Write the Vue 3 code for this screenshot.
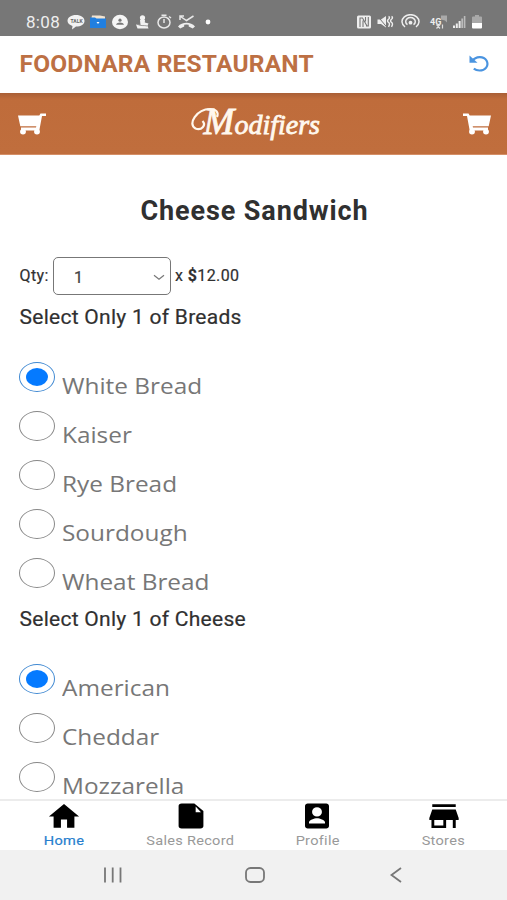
<script setup>
import { ref } from 'vue'

const qty = ref(1)
const groups = ref([
  { name: 'Breads', picked: 'White Bread', options: ['White Bread', 'Kaiser', 'Rye Bread', 'Sourdough', 'Wheat Bread'] },
  { name: 'Cheese', picked: 'American', options: ['American', 'Cheddar', 'Mozzarella'] },
])
const tabs = [
  { label: 'Home', icon: 'M9.700 21.300v-6.500h4.600v6.500h5.500V12.400h3.500L12 2.300.7 12.400h3.500v8.900z' },
  { label: 'Sales Record', icon: 'M5 2C3.500 2 2.700 3 2.700 4v16c0 1 .8 2 2.300 2h14c1.500 0 2.300-1 2.300-2V8l-6.800-6zm10.500 2.300L19.500 9h-4z' },
  { label: 'Profile', icon: 'M5 2c-1 0-2 1-2 2v16c0 1 1 2 2 2h14c1 0 2-1 2-2V4c0-1-1-2-2-2zm7 3a3.500 3.500 0 1 1 0 7.400A3.500 3.500 0 0 1 12 5zm6 13H6v-1c0-2 4-3.300 6-3.300s6 1.300 6 3.300z' },
  { label: 'Stores', icon: 'M3.200 2.500h17.600v2.200H3.200zM20.800 6.700H3.200L1 13.500v1.700h1.600v6.300h11v-6.300h5v6.300h2.200v-6.300H23v-1.700zM11.500 19.500H4.700v-4.300h6.800z' },
]
const active = ref('Home')
</script>

<template>
  <div class="phone">
    <div class="status">
      <span class="clock">8:08</span>
      <svg class="status-left" width="148" height="16" viewBox="0 0 148 16">
        <path d="M9 1c5 0 8.500 2.500 8.500 6S14 12.500 9 12.500L5 15.500l.5-3.500C2.500 11 .5 9.300.5 7 .5 3.500 4 1 9 1z" fill="#f2f2f2" />
        <text x="3.500" y="8.800" class="tiny">TALK</text>
        <path d="M25 1.500h8l5 1v4H24z" fill="#f3e4d1" />
        <path d="M23 3.500h5l1.500 1H39v9.500H23z" fill="#217fe0" />
        <path d="M29.500 8h3L31 10z" fill="#fff" />
        <ellipse cx="53" cy="8" rx="8" ry="7.200" fill="#f5f5f5" />
        <circle cx="53" cy="6.200" r="1.600" fill="#777" />
        <path d="M49 10.700c1-2.800 7-2.800 8 0z" fill="#777" />
        <g fill="#f2f2f2">
          <circle cx="75.500" cy="3.800" r="2.600" />
          <path d="M73 6h5l-.2 2.500 3.700 1-1 2 1 3H70.500l-1.500-4 4.500.500z" />
        </g>
        <path d="M70 10c3 2.500 7 1 10.500 2" stroke="#888" stroke-width=".8" fill="none" />
        <g fill="none" stroke="#e8e8e8" stroke-width="1.500">
          <ellipse cx="97" cy="8.500" rx="6" ry="5.500" />
          <path d="M94.500 1.200h5M97 5v4M102 2.500l2 1.500" />
          <path d="M113.500 2.500l6 4 7-4.500M113 6v-4h4" />
        </g>
        <path d="M111 12.500c4-5 13-5 17 0l-2.300 2-4-2v-1.700q-2.300-.7-4.500 0v1.700l-4 2z" fill="#eee" />
        <circle cx="141" cy="8" r="2.400" fill="#fff" />
      </svg>
      <svg class="status-right" width="130" height="16" viewBox="0 0 130 16">
        <rect x="0" y="1.500" width="14" height="13" rx="1.500" fill="#eee" />
        <path d="M3 13V4h2.500l4.500 8M6 6.500V13M8.500 3v4.500M11.300 3v9H9" fill="none" stroke="#777" stroke-width="1.100" />
        <path d="M20.500 5.500H24l5-3.500v11.500l-5-3.500h-3.500z" fill="#eee" />
        <path d="M20.500 2l10 12" stroke="#777" stroke-width="1" />
        <path d="M31.500 2.500q2 1 0 2.800t0 3 0 4.500M34.500 2.500q2 1 0 2.800t0 3 0 4.500" fill="none" stroke="#eee" stroke-width="1.400" />
        <g fill="none" stroke="#eee" stroke-width="1.500">
          <path d="M48 13a8.500 7 0 1 1 11 0" />
          <path d="M50.500 10.700a4.800 4 0 1 1 6 0" />
        </g>
        <circle cx="53.500" cy="8.700" r="1.900" fill="#eee" />
        <text x="73" y="11" class="network">4G</text>
        <path d="M84 1.500h6v7l-2-2-4-1z" fill="#aaa" />
        <path d="M79.500 10.500l3.500 4m0-4l-3.500 4m6-4v4" fill="none" stroke="#ddd" stroke-width="1.200" />
        <path d="M96 11.500h2V14h-2zM98.800 9.500h2V14h-2zM101.600 7h2v7h-2z" fill="#eee" />
        <path d="M104.300 4.500h1.800V14h-1.800zM106.800 2h1.600v12h-1.600z" fill="#bbb" />
        <path d="M116 2.500h2V1h4v1.500h2q1 0 1 1V9h-10V3.500q0-1 1-1z" fill="#a9a9a9" />
        <path d="M115 9h10v4.500q0 1-1 1h-8q-1 0-1-1z" fill="#fff" />
      </svg>
    </div>

    <header class="brand">
      <h1>FOODNARA RESTAURANT</h1>
      <svg width="22" height="20" viewBox="0 0 22 20" fill="none" stroke="#4a94e0" stroke-width="2.200">
        <path d="M4 7C8 2 15.500 1.800 18.500 6.500c3 5.500-1.500 10-7 10-2.300 0-4-.5-5.700-1.900" />
        <path d="M1.500 1.500v7.300h8z" fill="#4a94e0" stroke="none" />
      </svg>
    </header>

    <div class="banner">
      <svg class="cart flipped" width="28" height="22" viewBox="0 0 28 22">
        <path d="M0 .5h5.500L6.700 2.500H28L25.700 13.200H9.700l.3 1.300H25v3H6.700L4 3H0z" />
        <ellipse cx="9" cy="18.800" rx="2.900" ry="2.700" /><ellipse cx="23" cy="18.800" rx="2.900" ry="2.700" />
      </svg>
      <div class="script">
        <svg class="swash" width="34" height="32" viewBox="0 0 34 32"><path d="M12.500 14c4 4-1 10-7 7.500C-3 17 7 2 20 2c6 0 9 3 7 8" /></svg>
        <span><b>M</b>odifiers</span>
      </div>
      <svg class="cart" width="28" height="22" viewBox="0 0 28 22">
        <path d="M0 .5h5.500L6.700 2.500H28L25.700 13.200H9.700l.3 1.300H25v3H6.700L4 3H0z" />
        <ellipse cx="9" cy="18.800" rx="2.900" ry="2.700" /><ellipse cx="23" cy="18.800" rx="2.900" ry="2.700" />
      </svg>
    </div>

    <main>
      <h2>Cheese Sandwich</h2>
      <div class="quantity">
        <span class="qty-label">Qty:</span>
        <button class="select">
          <span>{{ qty }}</span>
          <svg width="12" height="7" viewBox="0 0 12 7"><path d="M1 1.200l5 4 5-4" fill="none" stroke="#777" stroke-width="1.200" /></svg>
        </button>
        <span class="price">x <b>$</b>12.00</span>
      </div>
      <section v-for="group in groups" :key="group.name">
        <h3>Select Only 1 of {{ group.name }}</h3>
        <div v-for="option in group.options" :key="option" class="option" @click="group.picked = option">
          <i class="radio" :class="{ on: group.picked === option }"></i>
          <span>{{ option }}</span>
        </div>
      </section>
    </main>

    <nav class="tabs">
      <div v-for="tab in tabs" :key="tab.label" class="tab" :class="{ active: active === tab.label }" @click="active = tab.label">
        <svg width="32" height="30" viewBox="0 0 24 24" preserveAspectRatio="none"><path :d="tab.icon" fill="#000" fill-rule="evenodd" /></svg>
        <span>{{ tab.label }}</span>
      </div>
    </nav>

    <div class="system">
      <svg width="20" height="18" viewBox="0 0 20 18"><path d="M2 1.500v15M9.700 1.500v15M17.500 1.500v15" /></svg>
      <svg width="20" height="18" viewBox="0 0 20 18"><rect x="1" y="2" width="18" height="14" rx="4.500" /></svg>
      <svg width="20" height="18" viewBox="0 0 20 18"><path d="M15 2L5.500 9l9.500 7" /></svg>
    </div>
  </div>
</template>

<style>
body { margin: 0; background: #fff; }
</style>

<style scoped>
.phone { width: 507px; height: 900px; display: flex; flex-direction: column; overflow: hidden; background: #fff; font-family: Roboto, "Liberation Sans", sans-serif; color: #303030; }
h1, h2, h3 { margin: 0; }
.status { height: 36px; flex: none; box-sizing: border-box; padding: 8px 20px 0 26px; display: flex; align-items: center; background: #777; color: #eee; }
.clock { width: 41px; font-size: 17px; letter-spacing: .3px; white-space: nowrap; }
.status-right { margin-left: auto; }
.tiny { font: bold 5px Roboto, sans-serif; fill: #666; }
.network { font: bold 9px Roboto, sans-serif; fill: #eee; }
.brand { height: 57px; flex: none; box-sizing: border-box; padding: 0 17px 2px 19.500px; display: flex; align-items: center; justify-content: space-between; background: #fff; }
.brand h1 { font-size: 24.500px; font-weight: 700; letter-spacing: .2px; color: #bd7044; white-space: nowrap; }
.banner { height: 62px; flex: none; box-sizing: border-box; padding: 0 16px 0 18px; display: flex; align-items: center; justify-content: space-between; background: linear-gradient(#a95f36, #bf6c3b 6px, #c06e3d); border-bottom: 1px solid #d58f67; }
.cart { fill: #fff; }
.flipped { transform: scaleX(-1); }
.script { width: 131px; height: 40px; display: flex; align-items: center; justify-content: flex-end; position: relative; color: #fff8ee; }
.script span { font: italic 400 28px/40px "Liberation Serif", serif; -webkit-text-stroke: .8px #fff8ee; white-space: nowrap; padding-top: 2px; }
.script b { font-size: 37px; font-weight: 400; line-height: 30px; }
.swash { position: absolute; left: 1px; top: 3px; fill: none; stroke: #fff8ee; stroke-width: 2.200; }
main { flex: 1; min-height: 0; overflow: hidden; padding: 0 19px; }
h2 { height: 102px; line-height: 113px; text-align: center; font-size: 27px; letter-spacing: .9px; white-space: nowrap; padding-left: 2px; }
.quantity { height: 39px; display: flex; align-items: flex-start; font-size: 16px; font-weight: 400; -webkit-text-stroke: .2px #303030; }
.qty-label, .price { line-height: 37px; white-space: nowrap; letter-spacing: .4px; }
.qty-label { width: 33.500px; padding-left: .5px; }
.select { width: 118px; height: 38px; box-sizing: border-box; padding: 2px 5px 0 20px; border: 1px solid #777; border-radius: 5px; background: #fff; display: flex; align-items: center; justify-content: space-between; font: 16px Roboto, sans-serif; color: #444; }
.price { margin-left: 4px; letter-spacing: .4px; }
h3 { height: 57px; line-height: 42px; font-size: 21px; font-weight: 400; letter-spacing: .27px; -webkit-text-stroke: .2px #303030; white-space: nowrap; padding-left: .5px; }
.option { height: 49px; display: flex; align-items: flex-start; }
.radio { width: 36px; height: 30px; flex: none; margin: 9px 7px 0 .3px; box-sizing: border-box; border: 1.500px solid #888; border-radius: 50%; display: grid; place-items: center; }
.radio.on { border-color: #4089d2; }
.radio.on::after { content: ""; width: 22px; height: 18px; border-radius: 50%; background: #057aff; }
.option span { font: 21px/30px "Open Sans", "Noto Sans", sans-serif; color: #777; margin-top: 17.500px; white-space: nowrap; transform: scaleX(1.160); transform-origin: left; }
.tabs { height: 51px; flex: none; box-sizing: border-box; border-top: 2px solid #ececec; display: grid; grid-template-columns: repeat(4, 1fr); padding-left: 1px; background: #fff; }
.tab { display: flex; flex-direction: column; align-items: center; font-size: 13px; color: #999; letter-spacing: .25px; }
.tab svg { flex: none; }
.tab span { line-height: 16px; margin-top: 2px; white-space: nowrap; transform: scaleX(1.120); }
.tab.active { color: #277fce; -webkit-text-stroke: .2px #277fce; }
.system { height: 50px; flex: none; box-sizing: border-box; padding: 0 101px 0 103px; display: flex; align-items: center; justify-content: space-between; background: #f1f1f1; }
.system svg { fill: none; stroke: #777; stroke-width: 1.800; }
</style>
